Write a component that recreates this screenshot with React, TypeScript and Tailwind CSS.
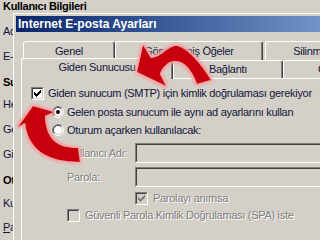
import React from "react";

function CheckMark({ color }: { color: string }) {
  const starts = [2, 3, 4, 3, 2, 1, 0];
  return (
    <svg width="7" height="7" viewBox="0 0 7 7" shapeRendering="crispEdges">
      {starts.map((s, i) => (
        <rect key={i} x={i} y={s} width="1" height="3" fill={color} />
      ))}
    </svg>
  );
}

function Checkbox({ checked, disabled }: { checked?: boolean; disabled?: boolean }) {
  return (
    <div className="w-[13px] h-[13px] shrink-0 border border-t-[#808080] border-l-[#808080] border-b-white border-r-white">
      <div
        className={
          disabled
            ? "w-full h-full flex items-center justify-center border border-t-[#404040] border-l-[#404040] border-b-[#d4d0c8] border-r-[#d4d0c8] bg-[#d4d0c8]"
            : "w-full h-full flex items-center justify-center border border-t-[#404040] border-l-[#404040] border-b-[#d4d0c8] border-r-[#d4d0c8] bg-white"
        }
      >
        {checked && <CheckMark color={disabled ? "#808080" : "#000000"} />}
      </div>
    </div>
  );
}

function Radio({ checked }: { checked?: boolean }) {
  return (
    <svg width="12" height="12" viewBox="0 0 12 12" className="shrink-0">
      <circle cx="6" cy="6" r="4.5" fill="#ffffff" />
      <path d="M2.11 9.89 A5.5 5.5 0 0 1 9.89 2.11" stroke="#808080" fill="none" />
      <path d="M9.89 2.11 A5.5 5.5 0 0 1 2.11 9.89" stroke="#ffffff" fill="none" />
      <path d="M2.82 9.18 A4.5 4.5 0 0 1 9.18 2.82" stroke="#404040" fill="none" />
      <path d="M9.18 2.82 A4.5 4.5 0 0 1 2.82 9.18" stroke="#d4d0c8" fill="none" />
      {checked && <circle cx="6" cy="6" r="2" fill="#000000" />}
    </svg>
  );
}

function TextBox() {
  return (
    <div className="flex-1 h-[20px] border border-t-[#808080] border-l-[#808080] border-b-white border-r-white">
      <div className="w-full h-full border border-t-[#404040] border-l-[#404040] border-b-[#d4d0c8] border-r-[#d4d0c8] bg-[#d4d0c8]" />
    </div>
  );
}

export default function App() {
  return (
    <div className="relative w-[320px] h-[240px] overflow-hidden bg-[#d4d0c8] font-['Liberation_Sans',Arial,sans-serif] text-[11px] tracking-[-0.3px] text-[#11163a] whitespace-nowrap">
      {/* background window (account settings) */}
      <div className="flex flex-col pl-[3px]">
        <div className="h-[12px] leading-[12px] font-bold text-black">Kullanıcı Bilgileri</div>
        <div className="h-[12px] leading-[12px] mt-[13px]">Adınız:</div>
        <div className="h-[12px] leading-[12px] mt-[13px]">E-posta Adresi:</div>
        <div className="h-[12px] leading-[12px] mt-[14px] font-bold text-black">Sunucu Bilgileri</div>
        <div className="h-[12px] leading-[12px] mt-[10px]">Hesap Türü:</div>
        <div className="h-[12px] leading-[12px] mt-[13px]">Gelen posta sunucusu:</div>
        <div className="h-[12px] leading-[12px] mt-[13px]">Giden posta sunucusu (SMTP):</div>
        <div className="h-[12px] leading-[12px] mt-[14px] font-bold text-black">Oturum Açma Bilgileri</div>
        <div className="h-[12px] leading-[12px] mt-[11px]">Kullanıcı Adı:</div>
        <div className="h-[12px] leading-[12px] mt-[12px]">
          <span className="underline">P</span>arola:
        </div>
      </div>

      {/* dialog window */}
      <div className="absolute left-[13px] top-[13px] w-[400px] h-[300px] border-l border-t border-white bg-[#d4d0c8] pl-[2px] pt-[2px] flex flex-col">
        <div className="h-[16px] flex items-center pl-[2px] bg-gradient-to-r from-[#0a246a] to-[#93b7e4] text-white font-bold text-[12px] tracking-normal">
          Internet E-posta Ayarları
        </div>

        <div className="ml-[5px] mt-[9px] flex flex-col flex-1">
          {/* tab row 1 */}
          <div className="flex ml-[2px] h-[19px]">
            <div className="w-[92px] h-[19px] border-t border-l border-white border-r border-r-[#404040] shadow-[inset_-1px_0_0_#808080] rounded-t-[3px] flex justify-center pt-[3px] leading-[12px]">
              Genel
            </div>
            <div className="w-[148px] h-[19px] border-t border-l border-white border-r border-r-[#404040] shadow-[inset_-1px_0_0_#808080] rounded-t-[3px] flex justify-center pt-[3px] leading-[12px]">
              Gönderilmiş Öğeler
            </div>
            <div className="ml-[2px] w-[126px] h-[19px] border-t border-l border-white border-r border-r-[#404040] shadow-[inset_-1px_0_0_#808080] rounded-t-[3px] flex justify-center pt-[3px] leading-[12px]">
              Silinmiş Öğeler
            </div>
          </div>

          {/* tab row 2 */}
          <div className="flex items-end h-[20px] -mt-[2px] relative z-10">
            <div className="w-[152px] h-[21px] -mb-[1px] bg-[#d4d0c8] border-t border-l border-white border-r border-r-[#404040] shadow-[inset_-1px_0_0_#808080] rounded-t-[3px] flex justify-center pt-[2px] leading-[12px]">
              Giden Sunucusu
            </div>
            <div className="w-[110px] h-[18px] bg-[#d4d0c8] border-t border-l border-white border-r border-r-[#404040] shadow-[inset_-1px_0_0_#808080] rounded-t-[3px] flex justify-center pt-[2px] leading-[12px]">
              Bağlantı
            </div>
            <div className="w-[110px] h-[18px] bg-[#d4d0c8] border-t border-l border-white border-r border-r-[#404040] shadow-[inset_-1px_0_0_#808080] rounded-t-[3px] flex justify-center pt-[2px] leading-[12px]">
              Gelişmiş
            </div>
          </div>

          {/* tab panel */}
          <div className="flex-1 border-t border-l border-white pt-[8px] pl-[9px] flex flex-col">
            <div className="flex items-center h-[13px] gap-[4px]">
              <Checkbox checked />
              <span>Giden sunucum (SMTP) için kimlik doğrulaması gerekiyor</span>
            </div>
            <div className="flex items-center h-[12px] mt-[6px] ml-[21px] gap-[3px]">
              <Radio checked />
              <span>Gelen posta sunucum ile aynı ad ayarlarını kullan</span>
            </div>
            <div className="flex items-center h-[12px] mt-[6px] ml-[21px] gap-[3px]">
              <Radio />
              <span>Oturum açarken kullanılacak:</span>
            </div>
            <div className="flex items-center h-[20px] mt-[7px] ml-[36px]">
              <span className="w-[68px] text-[#808080] [text-shadow:1px_1px_0_#ffffff]">Kullanıcı Adı:</span>
              <TextBox />
            </div>
            <div className="flex items-center h-[20px] mt-[4px] ml-[36px]">
              <span className="w-[68px] text-[#808080] [text-shadow:1px_1px_0_#ffffff]">Parola:</span>
              <TextBox />
            </div>
            <div className="flex items-center h-[13px] mt-[5px] ml-[104px] gap-[5px]">
              <Checkbox checked disabled />
              <span className="text-[#808080] [text-shadow:1px_1px_0_#ffffff]">Parolayı anımsa</span>
            </div>
            <div className="flex items-center h-[13px] mt-[4px] ml-[36px] gap-[5px]">
              <Checkbox disabled />
              <span className="text-[#808080] [text-shadow:1px_1px_0_#ffffff]">Güvenli Parola Kimlik Doğrulaması (SPA) iste</span>
            </div>
          </div>
        </div>
      </div>

      {/* red annotation arrows */}
      <svg className="absolute left-0 top-0 pointer-events-none z-20" width="320" height="240" viewBox="0 0 320 240">
        <defs>
          <filter id="glow" x="-30%" y="-30%" width="160%" height="160%">
            <feMorphology in="SourceAlpha" operator="dilate" radius="1.5" result="dil" />
            <feGaussianBlur in="dil" stdDeviation="1.3" result="blur" />
            <feFlood floodColor="#f5a0a0" floodOpacity="0.9" />
            <feComposite in2="blur" operator="in" result="glowc" />
            <feMerge>
              <feMergeNode in="glowc" />
              <feMergeNode in="SourceGraphic" />
            </feMerge>
          </filter>
        </defs>
        <path
          d="M137 72 L143 45 L151 58 C162 57 170 44 178 46 C190 50 204 68 211 80 L197 84 C192 70 184 60 174 61 C167 62 162 68 160 74 L166 86 Z"
          fill="#c8000c"
          filter="url(#glow)"
        />
        <path
          d="M33 106 L54 112 L45 116 C46 140 58 148 78 148 L80 162 C45 162 28 148 25 123 L18 127 Z"
          fill="#c8000c"
          filter="url(#glow)"
        />
      </svg>
    </div>
  );
}
